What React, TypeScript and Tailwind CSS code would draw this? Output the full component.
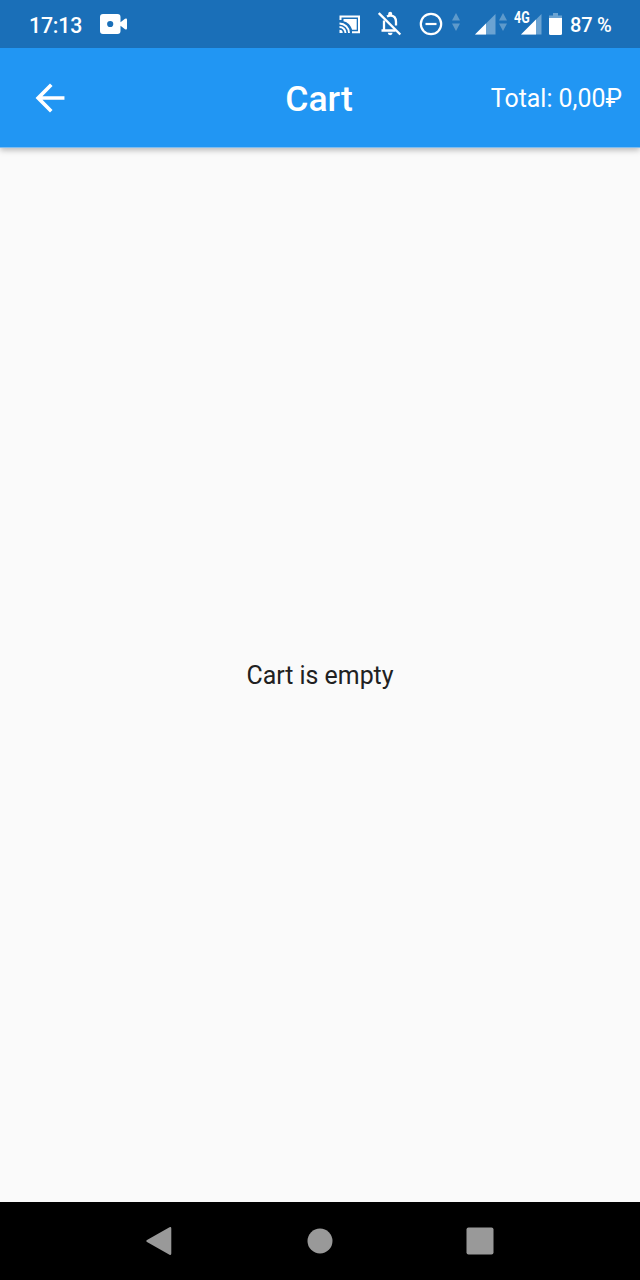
function DataArrows({ className }: { className: string }) {
  return (
    <svg className={className} width="8" height="18" viewBox="0 0 8 18" fill="#5e9acb">
      <path d="M4 0 8 7.500H0zM4 18 0 10.500h8z" />
    </svg>
  );
}

function Signal({ className, level }: { className: string; level: number }) {
  return (
    <svg className={className} width="21" height="21" viewBox="0 0 21 21">
      <path d="M20.500 0v20.500H0z" fill="#6ba3d2" />
      <path d={`M${level} ${20.5 - level}v${level}H0z`} fill="#fff" />
    </svg>
  );
}

function StatusBar() {
  return (
    <div className="z-20 flex h-12 shrink-0 items-center bg-[#1a6fb8] text-white">
      <span className="ml-[29px] w-[54px] pt-[3px] text-[21.300px] leading-none font-medium tracking-[-0.200px] whitespace-nowrap">17:13</span>
      <svg className="ml-[17px] shrink-0" width="28" height="22" viewBox="0 0 28 22">
        <path
          fill="#fff"
          fillRule="evenodd"
          d="M3 1h14.500a3 3 0 0 1 3 3v5.200L25 5.800q2-1 2 1v8.400q0 2-2 1l-4.500-3.400V18a3 3 0 0 1-3 3H3a3 3 0 0 1-3-3V4a3 3 0 0 1 3-3zM10.200 7.900a3.100 3.100 0 1 0 0 6.200 3.100 3.100 0 0 0 0-6.200z"
        />
      </svg>
      <div className="ml-auto flex h-full items-center pr-[28px]">
        <svg width="22" height="19" viewBox="0 0 22 19" fill="none" stroke="#fff">
          <path d="M1.500 5V1.500h18.500v15.700h-7" strokeWidth="2" />
          <path d="M4.500 4.100h13.200v10.600h-4.600C11.500 9.800 8.800 7.300 4.500 6.200z" fill="#fff" stroke="none" />
          <path d="M.5 8.500a9.500 9.500 0 0 1 9.500 9.500M.5 12a6 6 0 0 1 6 6" strokeWidth="1.900" />
          <path d="M.5 14.800a3.200 3.200 0 0 1 3.200 3.200H.5z" fill="#fff" stroke="none" />
        </svg>
        <svg className="ml-[17px]" width="24" height="26" viewBox="0 0 24 26" fill="none" stroke="#fff">
          <path d="M6 9.500v10M3.500 19.500h14M18 14.500v-3.500c0-4-2.300-6.300-5.800-6.300-1.300 0-2.200.3-3.200.9" strokeWidth="2.300" />
          <path d="M10.200 4.500V2.700a2 2 0 0 1 4 0v1.800zM9.800 21.800h4.800a2.400 2.400 0 0 1-4.800 0z" fill="#fff" stroke="none" />
          <path d="m.8 2 21.500 21.500" strokeWidth="2.400" />
        </svg>
        <svg className="ml-[17px]" width="24" height="24" viewBox="0 0 24 24" fill="none" stroke="#fff" strokeWidth="2.200">
          <circle cx="12" cy="12" r="10.200" />
          <path d="M6.500 12h11" />
        </svg>
        <DataArrows className="mb-[4px] ml-[9px]" />
        <Signal className="mt-px ml-[15px]" level={11} />
        <DataArrows className="mb-[4px] ml-[3px]" />
        <div className="relative ml-[14px] h-full w-[21px]">
          <Signal className="mt-[14px]" level={15} />
          <span className="absolute top-[10px] left-[-7px] origin-left scale-x-[0.78] text-[16px] leading-none font-bold">4G</span>
        </div>
        <svg className="ml-[7px]" width="13" height="22" viewBox="0 0 13 22">
          <path d="M4 0h5v2.500h4V6H0V2.500h4z" fill="#6ba3d2" />
          <path d="M0 5h13v15.500a1.500 1.500 0 0 1-1.500 1.500h-10A1.500 1.500 0 0 1 0 20.500z" fill="#fff" />
        </svg>
        <span className="ml-[8px] w-[42px] pt-[2px] text-[20px] leading-none font-medium tracking-[-0.200px] whitespace-nowrap">87 %</span>
      </div>
    </div>
  );
}

function AppBar() {
  return (
    <header className="z-10 grid h-[100px] shrink-0 grid-cols-[1fr_auto_1fr] items-center border-b border-[#7fbdf0] bg-[#2196f3] text-white shadow-[0_2px_6px_rgba(0,0,0,0.28)]">
      <svg className="ml-[35px]" width="30" height="30" viewBox="3.700 4 16.600 16" fill="#fff">
        <path d="M20 11H7.830l5.590-5.590L12 4l-8 8 8 8 1.410-1.410L7.830 13H20v-2z" />
      </svg>
      <h1 className="mr-[2px] pt-[5px] text-[35.500px] leading-none font-medium">Cart</h1>
      <span className="mr-[18px] justify-self-end pt-[3px] text-[24.900px] leading-none whitespace-nowrap">Total: 0,00₽</span>
    </header>
  );
}

function NavigationBar() {
  return (
    <nav className="grid h-[78px] shrink-0 grid-cols-[160px_160px_160px] place-content-center place-items-center bg-black">
      <svg className="mr-[3px]" width="28" height="30" viewBox="0 0 28 30" fill="#999">
        <path d="M24.500 1.300q1.800-.8 1.800 1.200v25q0 2-1.800 1.200L2 16q-1.800-1 0-2z" />
      </svg>
      <svg width="26" height="26" viewBox="0 0 26 26" fill="#999">
        <circle cx="13" cy="13" r="12.500" />
      </svg>
      <svg width="28" height="28" viewBox="0 0 28 28" fill="#999">
        <rect x="0.500" y="0.500" width="27" height="27" rx="2" />
      </svg>
    </nav>
  );
}

export default function App() {
  return (
    <div className="flex h-[1280px] w-[640px] flex-col overflow-hidden bg-[#fafafa] font-['Roboto',sans-serif]">
      <StatusBar />
      <AppBar />
      <main className="flex flex-1 items-center justify-center pt-[2px] text-[24.900px] leading-none text-[#212121]">Cart is empty</main>
      <NavigationBar />
    </div>
  );
}
